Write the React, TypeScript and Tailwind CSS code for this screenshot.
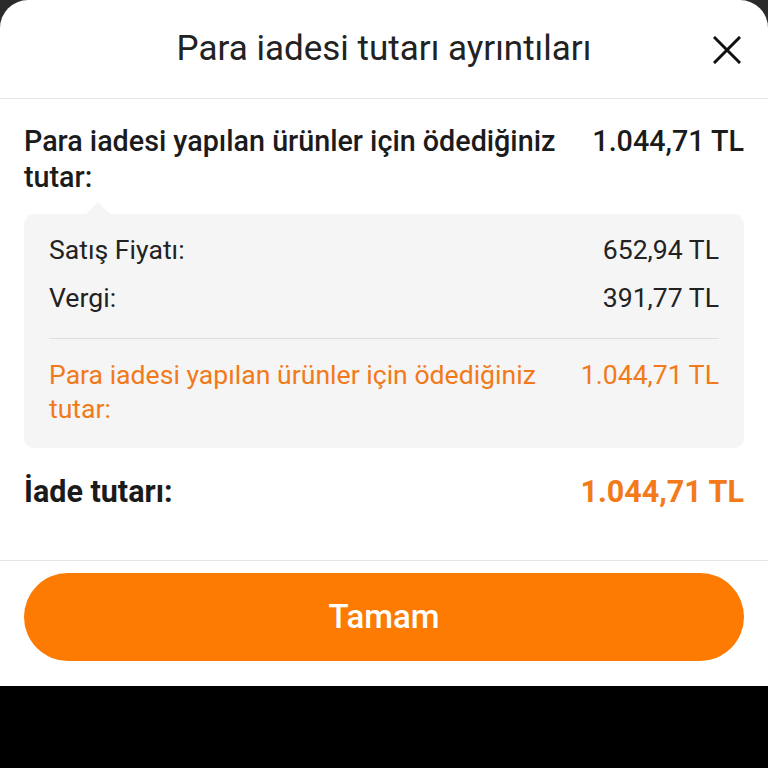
const font = { fontFamily: "Roboto, 'Noto Sans', sans-serif" };

function CloseIcon() {
  return (
    <svg width="28" height="28" viewBox="0 0 28 28" fill="none" stroke="#111" strokeWidth="3" strokeLinecap="square">
      <path d="M2 2L26 26M26 2L2 26" />
    </svg>
  );
}

export default function App() {
  return (
    <div className="flex h-[768px] w-[768px] flex-col bg-black" style={font}>
      <div className="bg-[#2b2b2b]">
        <div className="rounded-t-[28px] bg-white">
          {/* header */}
          <div className="relative flex h-[99px] items-center justify-center border-b border-[#e6e6e6]">
            <h1 className="text-[35px] font-normal text-[#222]">Para iadesi tutarı ayrıntıları</h1>
            <button className="absolute left-[713px] top-[36px]">
              <CloseIcon />
            </button>
          </div>

          <div className="px-[24px] pt-[24px]">
            <div className="flex items-start justify-between">
              <p className="w-[545px] text-[28.7px] font-medium leading-[36px] text-[#1b1b1b]">
                Para iadesi yapılan ürünler için ödediğiniz tutar:
              </p>
              <span className="whitespace-nowrap text-[28.7px] font-medium leading-[36px] text-[#1b1b1b]">
                1.044,71 TL
              </span>
            </div>

            {/* breakdown box */}
            <div className="relative mt-[19px] rounded-[10px] bg-[#f5f5f5] px-[25px] pb-[22px] pt-[18px]">
              <div className="absolute -top-[12px] left-[62px] h-0 w-0 border-x-[12px] border-b-[12px] border-x-transparent border-b-[#f5f5f5]" />
              <div className="flex justify-between text-[26.6px] leading-[36px] text-[#222]">
                <span>Satış Fiyatı:</span>
                <span>652,94 TL</span>
              </div>
              <div className="mt-[12px] flex justify-between text-[26.6px] leading-[36px] text-[#222]">
                <span>Vergi:</span>
                <span>391,77 TL</span>
              </div>
              <div className="mt-[22px] border-t border-[#dedede]" />
              <div className="mt-[19px] flex items-start justify-between text-[26.6px] leading-[34px] text-[#f27a1a]">
                <span className="w-[505px]">Para iadesi yapılan ürünler için ödediğiniz tutar:</span>
                <span className="whitespace-nowrap">1.044,71 TL</span>
              </div>
            </div>

            <div className="flex h-[88px] items-center justify-between">
              <span className="text-[30.5px] font-bold text-[#1b1b1b]">İade tutarı:</span>
              <span className="text-[30.5px] font-bold text-[#f27a1a]">1.044,71 TL</span>
            </div>
          </div>

          <div className="mt-[24px] border-t border-[#e6e6e6] px-[24px] pb-[25px] pt-[12px]">
            <button className="flex h-[88px] w-full items-center justify-center rounded-full bg-[#fd7b02] text-[33px] font-medium text-white">
              Tamam
            </button>
          </div>
        </div>
      </div>
      <div className="flex-1 bg-black" />
    </div>
  );
}
